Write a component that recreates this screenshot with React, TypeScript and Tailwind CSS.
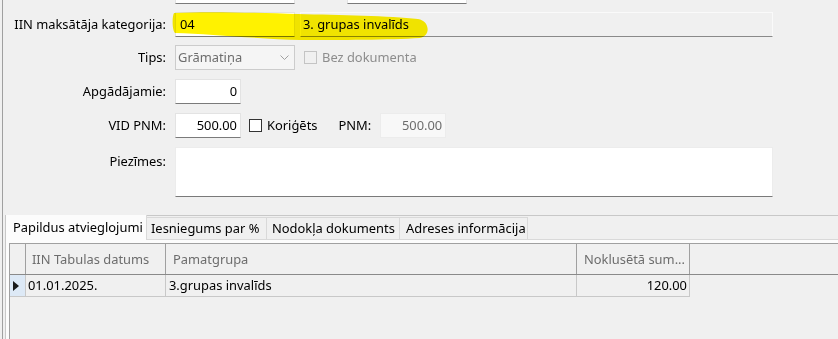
import React from "react";

function Check({ disabled }: { disabled?: boolean }) {
  return (
    <div
      className={
        disabled
          ? "w-[13px] h-[13px] border border-[#c4c4c4] bg-[#f0f0f0] shrink-0"
          : "w-[13px] h-[13px] border border-[#333333] bg-white shrink-0"
      }
    />
  );
}

export default function App() {
  return (
    <div className="relative w-[838px] h-[339px] overflow-hidden bg-[#f0f0f0] font-['Noto_Sans',sans-serif] text-[12.9px] leading-none text-black">
      <div className="ml-[2px] h-full border-l border-[#a0a0a0] flex flex-col">
        {/* partial top row */}
        <div className="flex items-center mt-[-21px] h-[25px]">
          <div className="w-[163px]" />
          <div className="ml-[9px] w-[120px] h-[25px] bg-white border border-[#e3e3e3] border-b-[#7a7a7a]" />
          <div className="ml-[52px] w-[120px] h-[25px] bg-white border border-[#e3e3e3] border-b-[#7a7a7a]" />
        </div>

        {/* Row 1 */}
        <div className="flex items-center mt-[8px] h-[25px]">
          <div className="w-[163px] text-right whitespace-nowrap">IIN maksātāja kategorija:</div>
          <div className="ml-[9px] w-[120px] h-[25px] bg-white border border-[#e3e3e3] border-b-[#7a7a7a] flex items-center pl-[4px]">
            04
          </div>
          <div className="ml-[5px] w-[473px] h-[25px] bg-[#f0f0f0] border border-[#fafafa] border-b-[#8a8a8a] flex items-center pl-[2px]">
            3. grupas invalīds
          </div>
        </div>

        {/* Row 2 */}
        <div className="flex items-center mt-[8px] h-[25px]">
          <div className="w-[163px] text-right">Tips:</div>
          <div className="ml-[9px] w-[120px] h-[25px] bg-[#f5f5f5] border border-[#cccccc] flex items-center pl-[2px] pr-[4px] text-[#6d6d6d]">
            <span className="flex-1">Grāmatiņa</span>
            <svg width="9" height="6" viewBox="0 0 9 6" className="mr-[1px]">
              <path d="M0.5 0.5 L4.5 4.5 L8.5 0.5" fill="none" stroke="#a0a0a0" strokeWidth="1" />
            </svg>
          </div>
          <div className="ml-[9px]">
            <Check disabled />
          </div>
          <div className="ml-[5px] text-[#8d8d8d]">Bez dokumenta</div>
        </div>

        {/* Row 3 */}
        <div className="flex items-center mt-[9px] h-[25px]">
          <div className="w-[163px] text-right">Apgādājamie:</div>
          <div className="ml-[9px] w-[66px] h-[25px] bg-white border border-[#e3e3e3] border-b-[#7a7a7a] flex items-center justify-end pr-[3px]">
            0
          </div>
        </div>

        {/* Row 4 */}
        <div className="flex items-center mt-[9px] h-[25px]">
          <div className="w-[163px] text-right">VID PNM:</div>
          <div className="ml-[9px] w-[66px] h-[25px] bg-white border border-[#e3e3e3] border-b-[#7a7a7a] flex items-center justify-end pr-[3px]">
            500.00
          </div>
          <div className="ml-[8px]">
            <Check />
          </div>
          <div className="ml-[5px]">Koriģēts</div>
          <div className="ml-[21px]">PNM:</div>
          <div className="ml-[9px] w-[66px] h-[25px] bg-[#f8f8f8] border border-[#ececec] flex items-center justify-end pr-[3px] text-[#6d6d6d]">
            500.00
          </div>
        </div>

        {/* Row 5 */}
        <div className="flex items-start mt-[9px] h-[50px]">
          <div className="w-[163px] text-right pt-[8px]">Piezīmes:</div>
          <div className="ml-[9px] w-[598px] h-[50px] bg-white border border-[#ececec] border-b-[#7a7a7a]" />
        </div>

        {/* Tab control */}
        <div className="mt-[18px] ml-[2px] flex-1 flex flex-col border-t border-l border-[#c8c8c8]">
          <div className="flex items-end h-[24px] border-b border-[#d9d9d9]">
            <div className="w-[141px] h-[25px] -mb-px bg-[#fcfcfc] border-r border-[#d9d9d9] flex items-center pl-[7px] whitespace-nowrap">
              Papildus atvieglojumi
            </div>
            <div className="w-[120px] h-[22px] bg-[#f0f0f0] border-t border-r border-[#d9d9d9] flex items-center pl-[4px] whitespace-nowrap">
              Iesniegums par %
            </div>
            <div className="w-[133px] h-[22px] bg-[#f0f0f0] border-t border-r border-[#d9d9d9] flex items-center pl-[5px] whitespace-nowrap">
              Nodokļa dokuments
            </div>
            <div className="w-[128px] h-[22px] bg-[#f0f0f0] border-t border-r border-[#d9d9d9] flex items-center pl-[6px] whitespace-nowrap">
              Adreses informācija
            </div>
          </div>
          <div className="flex-1 bg-[#fcfcfc] pt-[3px] pl-[3px] flex flex-col">
            <div className="flex-1 bg-[#f0f0f0] border-t border-l border-[#a0a0a0]">
              {/* header */}
              <div className="flex h-[31px] border-b border-[#8a8a8a] text-[#6d6d6d] whitespace-nowrap">
                <div className="w-[16px] border-r border-[#a0a0a0]" />
                <div className="w-[140px] border-r border-[#a0a0a0] flex items-center pl-[6px]">IIN Tabulas datums</div>
                <div className="w-[411px] border-r border-[#a0a0a0] flex items-center pl-[7px]">Pamatgrupa</div>
                <div className="w-[113px] border-r border-[#a0a0a0] flex items-center justify-end pr-[4px]">Noklusētā sum...</div>
              </div>
              {/* row */}
              <div className="flex h-[22px] whitespace-nowrap">
                <div className="w-[16px] bg-[#dde9f6] border-r border-b border-[#c8c8c8] flex items-center pl-[3px]">
                  <svg width="6" height="10" viewBox="0 0 6 10">
                    <path d="M0 0 L6 5 L0 10 Z" fill="#1a1a1a" />
                  </svg>
                </div>
                <div className="w-[140px] border-r border-b border-[#c8c8c8] flex items-center pl-[2px]">01.01.2025.</div>
                <div className="w-[411px] border-r border-b border-[#c8c8c8] flex items-center pl-[3px]">3.grupas invalīds</div>
                <div className="w-[113px] border-r border-b border-[#c8c8c8] flex items-center justify-end pr-[2px]">120.00</div>
              </div>
            </div>
          </div>
        </div>
      </div>

      {/* Yellow marker highlight */}
      <svg
        className="absolute left-0 top-0 pointer-events-none mix-blend-multiply"
        width="838"
        height="60"
        viewBox="0 0 838 60"
      >
        <path
          d="M174 13 C 210 11, 260 13, 298 14 C 340 15, 390 16, 418 19 C 430 21, 431 36, 420 38 C 390 40, 340 40, 300 40 C 260 39, 210 34, 175 33 C 172 30, 172 16, 174 13 Z"
          fill="#fff200"
        />
      </svg>
    </div>
  );
}
